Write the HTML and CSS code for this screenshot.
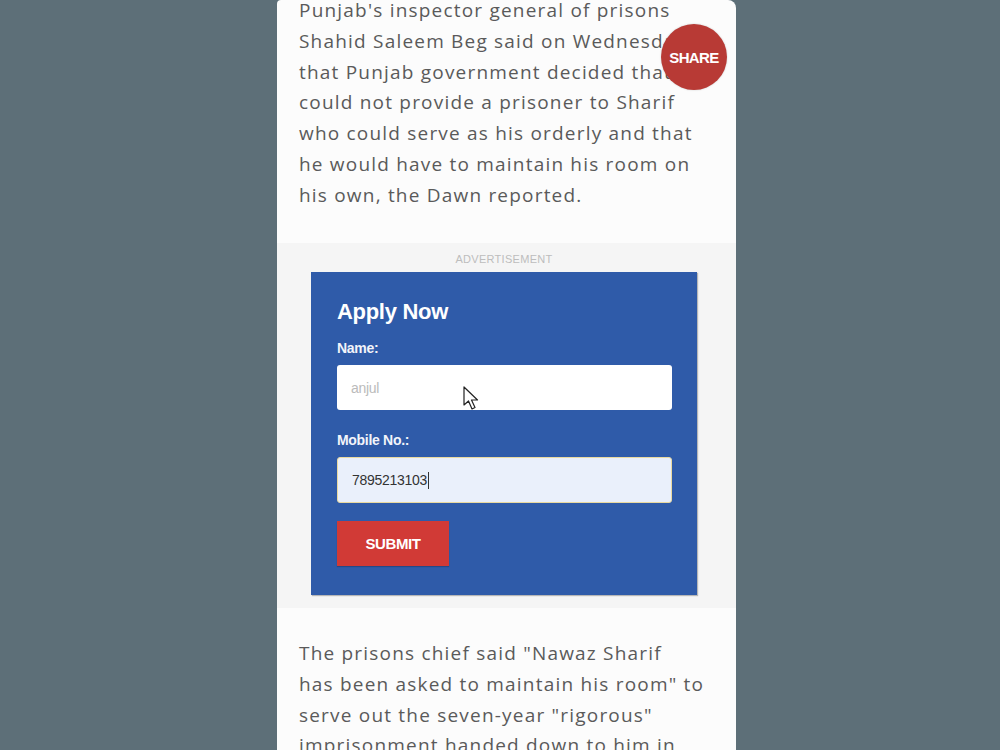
FILE: index.html
```html
<!DOCTYPE html>
<html>
<head>
<meta charset="utf-8">
<link rel="stylesheet" href="styles.css">
</head>
<body>
<div class="phone">
  <p class="para first">Punjab's inspector general of prisons<br>Shahid Saleem Beg said on Wednesday<br>that Punjab government decided that it<br>could not provide a prisoner to Sharif<br>who could serve as his orderly and that<br>he would have to maintain his room on<br>his own, the Dawn reported.</p>
  <div class="ad">
    <div class="ad-label">ADVERTISEMENT</div>
    <div class="form-box">
      <div class="form-title">Apply Now</div>
      <div class="label">Name:</div>
      <div class="input empty">anjul</div>
      <div class="label label2">Mobile No.:</div>
      <div class="input filled">7895213103<span class="caret"></span></div>
      <div class="submit">SUBMIT</div>
    </div>
  </div>
  <p class="para second">The prisons chief said "Nawaz Sharif<br>has been asked to maintain his room" to<br>serve out the seven-year "rigorous"<br>imprisonment handed down to him in</p>
  <div class="share">SHARE</div>
  <svg class="cursor" width="18" height="26" viewBox="0 0 18 26"><path d="M1 1 L1 19 L5.5 15 L9 23 L12 21.5 L8.5 14 L14.5 14 Z" fill="#fff" stroke="#222" stroke-width="1.2" stroke-linejoin="round"/></svg>
</div>
</body>
</html>
```
FILE: styles.css
```css
html, body {
  margin: 0;
  padding: 0;
  height: 100%;
  overflow: hidden;
}
body {
  background: #5d6f78;
  font-family: "Open Sans", "Lato", sans-serif;
}
.phone {
  position: relative;
  margin-left: 277px;
  width: 459px;
  height: 750px;
  background: #fcfcfc;
  border-top-right-radius: 8px;
  border-top-left-radius: 4px;
  overflow: hidden;
}
.para {
  margin: 0;
  padding: 0 0 0 22px;
  font-size: 19px;
  line-height: 30.8px;
  color: #5a5a5a;
  letter-spacing: 1.2px;
  white-space: nowrap;
}
.first {
  margin-top: -5px;
  height: 248px;
}
.ad {
  background: #f5f5f5;
  padding: 10px 0 0 34px;
  height: 355px;
}
.ad-label {
  width: 386px;
  text-align: center;
  font-family: "Liberation Sans", Arial, sans-serif;
  font-size: 11px;
  color: #bdbdbd;
  letter-spacing: 0.3px;
  height: 19px;
}
.form-box {
  width: 386px;
  height: 323px;
  box-sizing: border-box;
  background: #2f5ba9;
  padding: 26px 25px 0 26px;
  box-shadow: 1px 1px 1px rgba(0,0,0,0.25);
}
.form-title {
  font-family: "Liberation Sans", Arial, sans-serif;
  font-weight: bold;
  font-size: 22px;
  color: #fff;
  line-height: 28px;
  letter-spacing: -0.3px;
}
.label {
  font-family: "Liberation Sans", Arial, sans-serif;
  font-weight: bold;
  font-size: 14px;
  color: #f2f4fa;
  margin-top: 13px;
  line-height: 18px;
  letter-spacing: -0.3px;
}
.label2 {
  margin-top: 21px;
}
.input {
  margin-top: 8px;
  height: 45px;
  box-sizing: border-box;
  border-radius: 3px;
  padding-left: 14px;
  display: flex;
  align-items: center;
  font-family: "Liberation Sans", Arial, sans-serif;
  font-size: 14px;
  letter-spacing: -0.3px;
}
.empty {
  background: #fff;
  color: #bbbbbb;
}
.filled {
  background: #eaf0fb;
  color: #333;
  border: 1px solid #e9d9a0;
  height: 46px;
}
.caret {
  display: inline-block;
  width: 1px;
  height: 17px;
  background: #333;
  margin-left: 1px;
}
.submit {
  margin-top: 18px;
  width: 112px;
  height: 45px;
  background: #d13a36;
  color: #fff;
  font-family: "Liberation Sans", Arial, sans-serif;
  font-weight: bold;
  font-size: 15px;
  display: flex;
  align-items: center;
  justify-content: center;
  letter-spacing: -0.4px;
  box-shadow: 0 1px 1px rgba(0,0,0,0.2);
}
.second {
  margin-top: 30px;
}
.share {
  position: absolute;
  left: 384px;
  top: 24px;
  width: 66px;
  height: 66px;
  border-radius: 50%;
  background: #b83a35;
  color: #fff;
  font-family: "Liberation Sans", Arial, sans-serif;
  font-weight: bold;
  font-size: 15px;
  letter-spacing: -0.6px;
  display: flex;
  align-items: center;
  justify-content: center;
  box-shadow: 0 0 2px rgba(0,0,0,0.2);
}
.cursor {
  position: absolute;
  left: 186px;
  top: 386px;
}
```
